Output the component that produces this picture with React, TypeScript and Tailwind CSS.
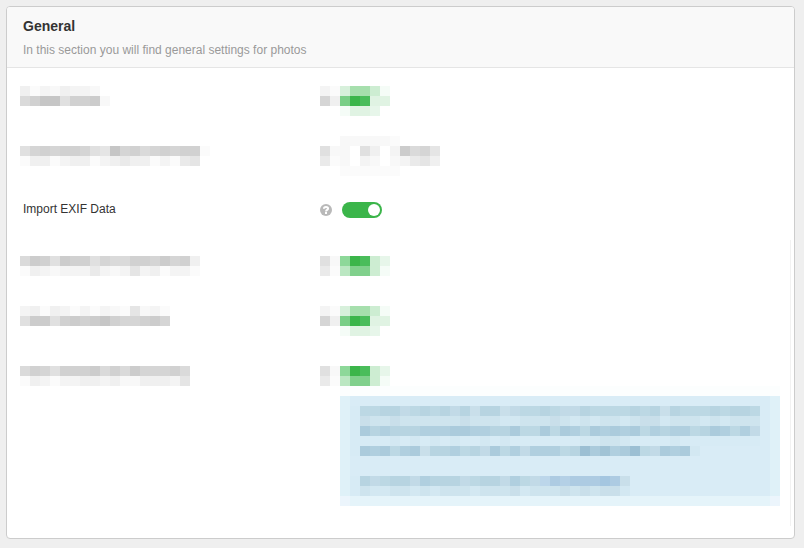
import { useState } from "react";

// One character per cell, "." is an empty cell
const COLORS: Record<string, string> = {
  "0": "#fbfbfb",
  "1": "#f8f8f8",
  "2": "#f4f4f4",
  "3": "#f0f0f0",
  "4": "#eaeaea",
  "5": "#e5e5e5",
  "6": "#e0e0e0",
  "7": "#dadada",
  "8": "#d5d5d5",
  "9": "#d1d1d1",
  A: "#cccccc",
  B: "#c6c6c6",
  G: "#3bb54a",
  H: "#4abd5b",
  J: "#79ce86",
  K: "#8dd899",
  L: "#a6dfad",
  M: "#bbe7c2",
  N: "#cdedd2",
  P: "#d7f0db",
  Q: "#e0f3e3",
  R: "#e7f6ea",
  S: "#f5fcf7",
  T: "#80d08c",
  a: "#abcbdc",
  b: "#b0cfdf",
  c: "#b7d4e1",
  d: "#bcd8e4",
  e: "#c2dae7",
  f: "#c9dfea",
  g: "#cee4ee",
  h: "#d3e8f2",
  i: "#d7ebf5",
  m: "#bcd6ea",
  n: "#adcbe2",
  o: "#b4d0e6",
  p: "#a4c6e0",
  y: "#9cbfd3",
  z: "#a1c3d5",
};

const CELL = 10;

const SWITCH_HIGH = ["20PLLNS", "83JGHQQ", "..SQQR."];
const SWITCH_LOW = ["61KGHNR", "40MTTNS"];

const NOTE = [
  "iddccedcdcecfccfeddcdeecddddcdcfcdddcdccd",
  "ifggfggggggfggghhgggfghghgghgffhggghghggg",
  "iacbcccbbbaabbccaddadabdababadbcbbdcabdbe",
  "iiiihihihihiihihiiiiiiihhgghiiiihiiiiiiii",
  "iabadbafccbdceadbebbbdcyazbaydeabah",
  "",
  "",
  "icedccebcccedccebdemnonnnpnf",
  "ighhgghghggghgggfhgggfgfgffh",
];

interface MosaicProps {
  rows: string[];
}

function Mosaic({ rows }: MosaicProps) {
  const width = Math.max(...rows.map((row) => row.length)) * CELL;
  const height = rows.length * CELL;

  return (
    <svg
      className="block shrink-0"
      width={width}
      height={height}
      viewBox={`0 0 ${width} ${height}`}
      shapeRendering="crispEdges"
      aria-hidden="true"
    >
      {rows.map((row, y) =>
        row.split("").map((key, x) =>
          COLORS[key] ? (
            <rect
              key={`${x}-${y}`}
              x={x * CELL}
              y={y * CELL}
              width={CELL}
              height={CELL}
              fill={COLORS[key]}
            />
          ) : null
        )
      )}
    </svg>
  );
}

interface HiddenRowProps {
  label: string[];
  control: string[];
}

function HiddenRow({ label, control }: HiddenRowProps) {
  return (
    <div className="grid grid-cols-[300px_1fr]">
      <Mosaic rows={label} />
      <Mosaic rows={control} />
    </div>
  );
}

function HelpIcon() {
  return (
    <svg className="h-3 w-3" viewBox="0 0 12 12" aria-hidden="true">
      <circle cx="6" cy="6" r="6" fill="#b9b9b9" />
      <path
        d="M3.9 4.8C3.9 3.4 4.8 2.9 6 2.9s2.1.6 2.1 1.7c0 1.4-2 1.2-2 2.8"
        fill="none"
        stroke="#ffffff"
        strokeWidth="2"
      />
      <rect x="5" y="8" width="2" height="2" fill="#ffffff" />
    </svg>
  );
}

function Note() {
  return (
    <div className="ml-[320px] grid grid-cols-[10px_1fr_10px]">
      <div className="col-span-3 h-[10px] bg-[#fcfefe]" />
      <div className="bg-[#dff1f8]" />
      <div className="overflow-hidden bg-[#d9ecf6] pt-[10px]">
        <Mosaic rows={NOTE} />
      </div>
      <div className="bg-[#dff1f8]" />
      <div className="h-[10px] bg-[#ecf5fc]" />
      <div className="bg-[#e5f4fa]" />
      <div className="bg-[#ecf5fc]" />
    </div>
  );
}

export default function App() {
  const [importExif, setImportExif] = useState(true);

  return (
    <main className="min-h-screen bg-[#efefef] py-[6px] pr-[9px] pl-[6px] font-['Liberation_Sans',Arial,sans-serif]">
      <section className="relative overflow-hidden rounded border border-[#cccccc] bg-white">
        <header className="border-b border-[#e5e5e5] bg-[#f9f9f9] px-4 pt-[9px] pb-2">
          <h2 className="text-sm font-bold text-[#333333]">General</h2>
          <p className="mt-[5px] text-xs leading-[18px] text-[#999999]">
            In this section you will find general settings for photos
          </p>
        </header>

        <div className="flex flex-col gap-5 pt-2 pr-[14px] pb-8 pl-[13px]">
          <HiddenRow
            label={["", "30213221", "79BB699A1"]}
            control={["", ...SWITCH_HIGH]}
          />
          <HiddenRow
            label={["", "689899865B897898990", "033023302343302045"]}
            control={["..111110", "611.63.2A785", "401.21.12453", "..000000"]}
          />

          <div className="grid h-10 grid-cols-[300px_1fr] items-center pb-3">
            <label
              htmlFor="import-exif"
              className="pb-[2px] pl-[3px] text-xs text-[#333333]"
            >
              Import EXIF Data
            </label>
            <div className="flex items-center gap-[10px]">
              <HelpIcon />
              <input
                id="import-exif"
                type="checkbox"
                role="switch"
                checked={importExif}
                onChange={(e) => setImportExif(e.target.checked)}
                className="flex h-4 w-10 cursor-pointer appearance-none items-center rounded-full bg-[#cccccc] px-[2px] before:h-3 before:w-3 before:rounded-full before:bg-white checked:justify-end checked:bg-[#3bb54a]"
              />
            </div>
          </div>

          <HiddenRow
            label={["7A96A996877998A893", "032122242125230220"]}
            control={SWITCH_LOW}
          />
          <HiddenRow
            label={["", "230320202105120", "6AA69A9AB9889A8"]}
            control={["", ...SWITCH_HIGH]}
          />
          <div>
            <HiddenRow
              label={["", "7986999A797A88897", "03202233231133325"]}
              control={["", ...SWITCH_LOW]}
            />
            <Note />
          </div>
        </div>

        <div className="absolute top-[233px] right-[3px] bottom-3 w-px bg-[#f2f2f2]" />
      </section>
    </main>
  );
}
